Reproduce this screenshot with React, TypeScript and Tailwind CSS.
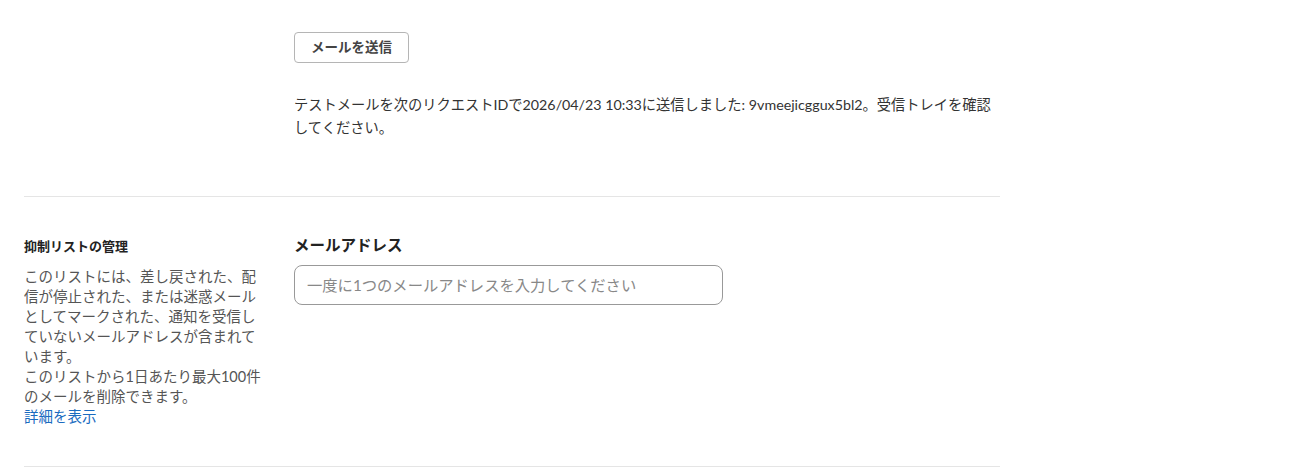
import React from "react";

export default function App() {
  return (
    <div className="min-h-[468px] bg-white text-[#333] pl-6">
      <div className="w-[976px] font-['Lato','Noto_Sans_CJK_JP',sans-serif]">
        <div className="flex pt-8 pb-[57px]">
          <div className="w-[270px] shrink-0" />
          <div className="flex-1">
            <button className="h-[31px] w-[115px] rounded-[4px] border border-[#b5b5b5] bg-white text-[13.5px] font-bold text-[#444]">
              メールを送信
            </button>
            <p className="mt-[30px] text-[14.25px] leading-[23px] text-[#333]">
              テストメールを次のリクエストIDで2026/04/23 10:33に送信しました: 9vmeejicggux5bl2。受信トレイを確認してください。
            </p>
          </div>
        </div>
        <div className="border-t border-[#e5e5e5] flex pt-[40px] pb-[39px]">
          <div className="w-[240px] shrink-0 mr-[30px]">
            <h3 className="text-[13px] font-bold leading-[18px] text-[#222]">抑制リストの管理</h3>
            <p className="mt-[12px] text-[14.5px] leading-[20px] text-[#555]">
              このリストには、差し戻された、配信が停止された、または迷惑メールとしてマークされた、通知を受信していないメールアドレスが含まれています。
              <br />
              このリストから1日あたり最大100件のメールを削除できます。
              <br />
              <a className="text-[#1a6bbf]" href="#">詳細を表示</a>
            </p>
          </div>
          <div className="flex-1">
            <label className="block text-[15.5px] font-bold leading-[16px] text-[#222]">メールアドレス</label>
            <input
              className="mt-[12px] h-[40px] w-[429px] rounded-[8px] border border-[#999] px-3 text-[15.3px] text-[#333] placeholder:text-[#888] outline-none"
              placeholder="一度に1つのメールアドレスを入力してください"
            />
          </div>
        </div>
        <div className="border-t border-[#e5e5e5]" />
      </div>
    </div>
  );
}
